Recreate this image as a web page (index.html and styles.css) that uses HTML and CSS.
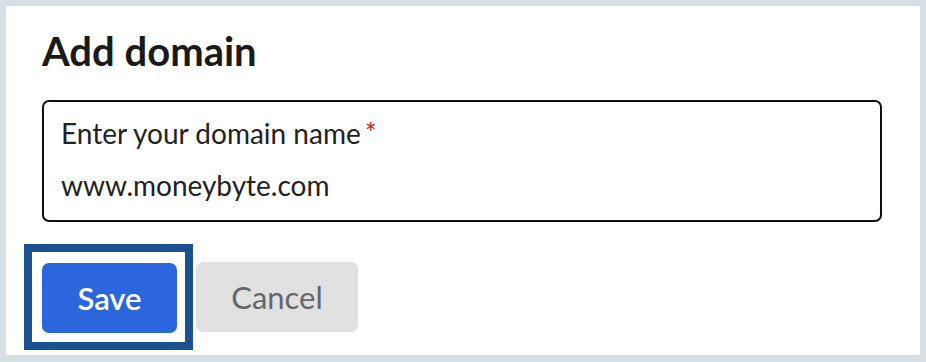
FILE: index.html
```html
<!DOCTYPE html>
<html lang="en">

<head>
    <meta charset="utf-8">
    <meta name="viewport" content="width=device-width, initial-scale=1.0">
    <title>Add domain</title>

    <link rel="stylesheet" href="styles.css">
</head>

<body>

    <div class="panel">
        <h1>Add domain</h1>

        <div class="felt">
            <label for="domain">Enter your domain name<span class="krav">*</span></label>
            <div id="domain" class="vaerdi">www.moneybyte.com</div>
        </div>

        <div class="knapper">
            <div class="fokus">
                <button class="gem">Save</button>
            </div>
            <button class="annuller">Cancel</button>
        </div>
    </div>

</body>

</html>
```

FILE: styles.css
```css
body {
    box-sizing: border-box;
    background-color: #d6dfe3;
    margin: 0;
    padding: 6px 6px 7px 6px;
    font-family: Lato, "Liberation Sans", sans-serif;
}

.panel {
    background-color: white;
    height: 349px;
    box-sizing: border-box;
    padding: 21px 38px 0 36px;
}

h1 {
    font-size: 40px;
    font-weight: 700;
    line-height: 48px;
    color: #1a1a1a;
    margin: 0 0 25px 0;
}

/*Feltet*/

.felt {
    border: 2px solid #111;
    border-radius: 7px;
    height: 122px;
    box-sizing: border-box;
    padding: 14px 15px 0 17px;
    color: #222;
}

.felt label {
    display: block;
    font-size: 28px;
    line-height: 34px;
}

.krav {
    color: #d9262b;
    font-size: 28px;
    margin-left: 4px;
}

.vaerdi {
    font-size: 28px;
    line-height: 34px;
    margin-top: 18px;
}

/*Knapper*/

.knapper {
    display: flex;
    align-items: center;
    gap: 3px;
    margin-top: 22px;
    margin-left: -18px;
}

.fokus {
    border: 8px solid #1b5191;
    padding: 11px 8px 9px 10px;
    display: flex;
}

button {
    font-family: inherit;
    border: none;
    border-radius: 7px;
    height: 70px;
    font-size: 31px;
    cursor: pointer;
}

.gem {
    width: 135px;
    background-color: #2c66dc;
    color: white;
    font-weight: 600;
}

.annuller {
    width: 162px;
    background-color: #e1e1e1;
    color: #65666a;
}
```
